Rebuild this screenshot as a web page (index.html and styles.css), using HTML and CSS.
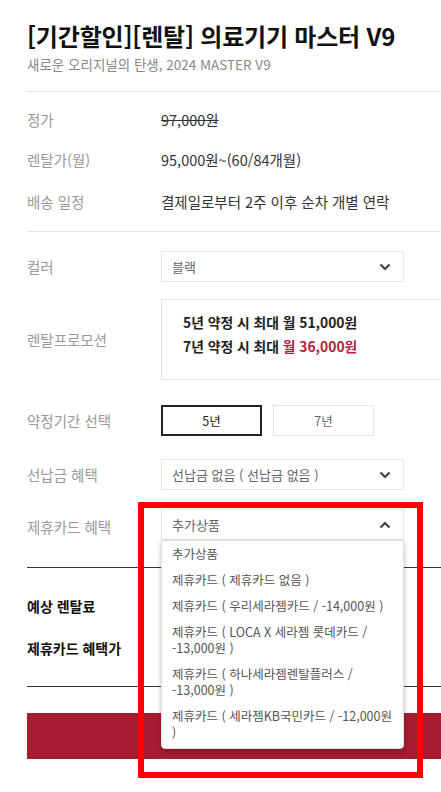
FILE: index.html
```html
<!DOCTYPE html>
<html lang="ko">
<head>
    <meta charset="UTF-8">
    <meta name="viewport" content="width=device-width, initial-scale=1.0">
    <title>의료기기 마스터 V9</title>
    <link rel="stylesheet" href="styles.css">
</head>
<body>

    <div class="page">
        <div class="head">
            <h1>[기간할인][렌탈] 의료기기 마스터 V9</h1>
            <p class="sub">새로운 오리지널의 탄생, 2024 MASTER V9</p>
        </div>

        <!-- 기본 정보 -->
        <div class="info">
            <div class="row">
                <span class="label">정가</span>
                <span class="value strike">97,000원</span>
            </div>
            <div class="row">
                <span class="label">렌탈가(월)</span>
                <span class="value">95,000원~(60/84개월)</span>
            </div>
            <div class="row">
                <span class="label">배송 일정</span>
                <span class="value">결제일로부터 2주 이후 순차 개별 연락</span>
            </div>
        </div>

        <!-- 옵션 선택 -->
        <div class="options">
            <div class="row row-color">
                <span class="label">컬러</span>
                <div class="select">
                    <span>블랙</span>
                    <svg class="chev" width="12" height="8" viewBox="0 0 12 8"><path d="M1.5 1.5 6 6l4.5-4.5" fill="none" stroke="#444" stroke-width="2.2"/></svg>
                </div>
            </div>
            <div class="row row-promo">
                <span class="label">렌탈프로모션</span>
                <div class="promo">
                    <p>5년 약정 시 최대 월 51,000원</p>
                    <p>7년 약정 시 최대 <em>월 36,000원</em></p>
                </div>
            </div>
            <div class="row row-term">
                <span class="label">약정기간 선택</span>
                <div class="terms">
                    <button class="term active">5년</button>
                    <button class="term">7년</button>
                </div>
            </div>
            <div class="row row-prepay">
                <span class="label">선납금 혜택</span>
                <div class="select">
                    <span>선납금 없음 ( 선납금 없음 )</span>
                    <svg class="chev" width="12" height="8" viewBox="0 0 12 8"><path d="M1.5 1.5 6 6l4.5-4.5" fill="none" stroke="#444" stroke-width="2.2"/></svg>
                </div>
            </div>
            <div class="row row-card">
                <span class="label">제휴카드 혜택</span>
                <div class="select open">
                    <span>추가상품</span>
                    <svg class="chev" width="12" height="8" viewBox="0 0 12 8"><path d="M1.5 6.5 6 2l4.5 4.5" fill="none" stroke="#444" stroke-width="2.2"/></svg>
                    <ul class="dropdown">
                        <li>추가상품</li>
                        <li>제휴카드 ( 제휴카드 없음 )</li>
                        <li>제휴카드 ( 우리세라젬카드 / -14,000원 )</li>
                        <li>제휴카드 ( LOCA X 세라젬 롯데카드 / -13,000원 )</li>
                        <li>제휴카드 ( 하나세라젬렌탈플러스 / -13,000원 )</li>
                        <li>제휴카드 ( 세라젬KB국민카드 / -12,000원 )</li>
                    </ul>
                </div>
            </div>
        </div>

        <!-- 요금 -->
        <div class="totals">
            <div class="row"><strong>예상 렌탈료</strong></div>
            <div class="row"><strong>제휴카드 혜택가</strong></div>
        </div>

        <button class="rent-btn"></button>

        <div class="highlight"></div>
    </div>

</body>
</html>
```

FILE: styles.css
```css
body {
    margin: 0;
    padding: 0;
    font-family: "Noto Sans CJK KR", "Noto Sans", sans-serif;
    color: #333;
    background-color: #fff;
    overflow: hidden;
}
.page {
    position: relative;
    padding-left: 27px;
    height: 792px;
}
.head {
    padding-top: 20px;
    padding-bottom: 17px;
    border-bottom: 1px solid #e6e6e6;
}
h1 {
    margin: 0;
    font-size: 24px;
    line-height: 32px;
    font-weight: 700;
    color: #111;
    letter-spacing: -0.2px;
}
.sub {
    margin: 2px 0 0;
    font-size: 13.5px;
    line-height: 20px;
    color: #888;
}
.row {
    display: grid;
    grid-template-columns: 134px 1fr;
    align-items: center;
}
.label {
    font-size: 14.5px;
    color: #999;
}
.value {
    font-size: 14.5px;
    color: #333;
}
.strike {
    text-decoration: line-through;
}
.info {
    padding: 15px 0 18px;
    border-bottom: 1px solid #e6e6e6;
}
.info .row {
    height: 24px;
}
.info .row + .row {
    margin-top: 16px;
}
.info .row:last-child {
    margin-top: 18px;
}
.options {
    padding: 19px 0 27px;
    border-bottom: 1px solid #333;
}
.select {
    position: relative;
    width: 243px;
    height: 31px;
    box-sizing: border-box;
    border: 1px solid #e6e6e6;
    padding: 0 10px;
    display: flex;
    align-items: center;
    justify-content: space-between;
    font-size: 13px;
    color: #666;
}
.chev {
    margin-right: 2px;
}
.row-promo {
    margin-top: 17px;
}
.promo {
    width: 300px;
    height: 81px;
    box-sizing: border-box;
    border: 1px solid #e0e0e0;
    padding: 10px 21px;
}
.promo p {
    margin: 0;
    font-size: 13.8px;
    line-height: 24px;
    font-weight: 700;
    color: #222;
}
.promo em {
    font-style: normal;
    color: #b3213a;
}
.row-term {
    margin-top: 25px;
}
.terms {
    display: flex;
    gap: 11px;
}
.term {
    width: 101px;
    height: 31px;
    background: #fff;
    border: 1px solid #e6e6e6;
    font-family: inherit;
    font-size: 12.5px;
    color: #666;
    padding: 0;
}
.term.active {
    border: 2px solid #222;
    color: #222;
}
.row-prepay {
    margin-top: 23px;
}
.row-card {
    margin-top: 19px;
}
.row-card .label {
    padding-top: 4px;
}
.dropdown {
    position: absolute;
    top: 30px;
    left: -1px;
    width: 243px;
    box-sizing: border-box;
    margin: 0;
    padding: 0 0 3px;
    list-style: none;
    background: #fff;
    border: 1px solid #e3e3e3;
    border-radius: 0 0 4px 4px;
    box-shadow: 0 2px 5px rgba(0, 0, 0, 0.25);
    z-index: 2;
}
.dropdown li {
    padding: 5px 6px 5px 10px;
    font-size: 12.5px;
    line-height: 16px;
    color: #555;
}
.totals {
    padding: 26px 0 26px;
    border-bottom: 1px solid #333;
}
.totals .row {
    height: 24px;
    font-size: 14px;
    color: #111;
}
.totals .row + .row {
    margin-top: 18px;
}
.rent-btn {
    display: block;
    width: 100%;
    height: 46px;
    margin-top: 26px;
    border: none;
    background-color: #a51d2e;
}
.highlight {
    position: absolute;
    left: 138px;
    top: 502px;
    width: 285px;
    height: 276px;
    box-sizing: border-box;
    border: 6px solid #f00;
    z-index: 3;
}
```
